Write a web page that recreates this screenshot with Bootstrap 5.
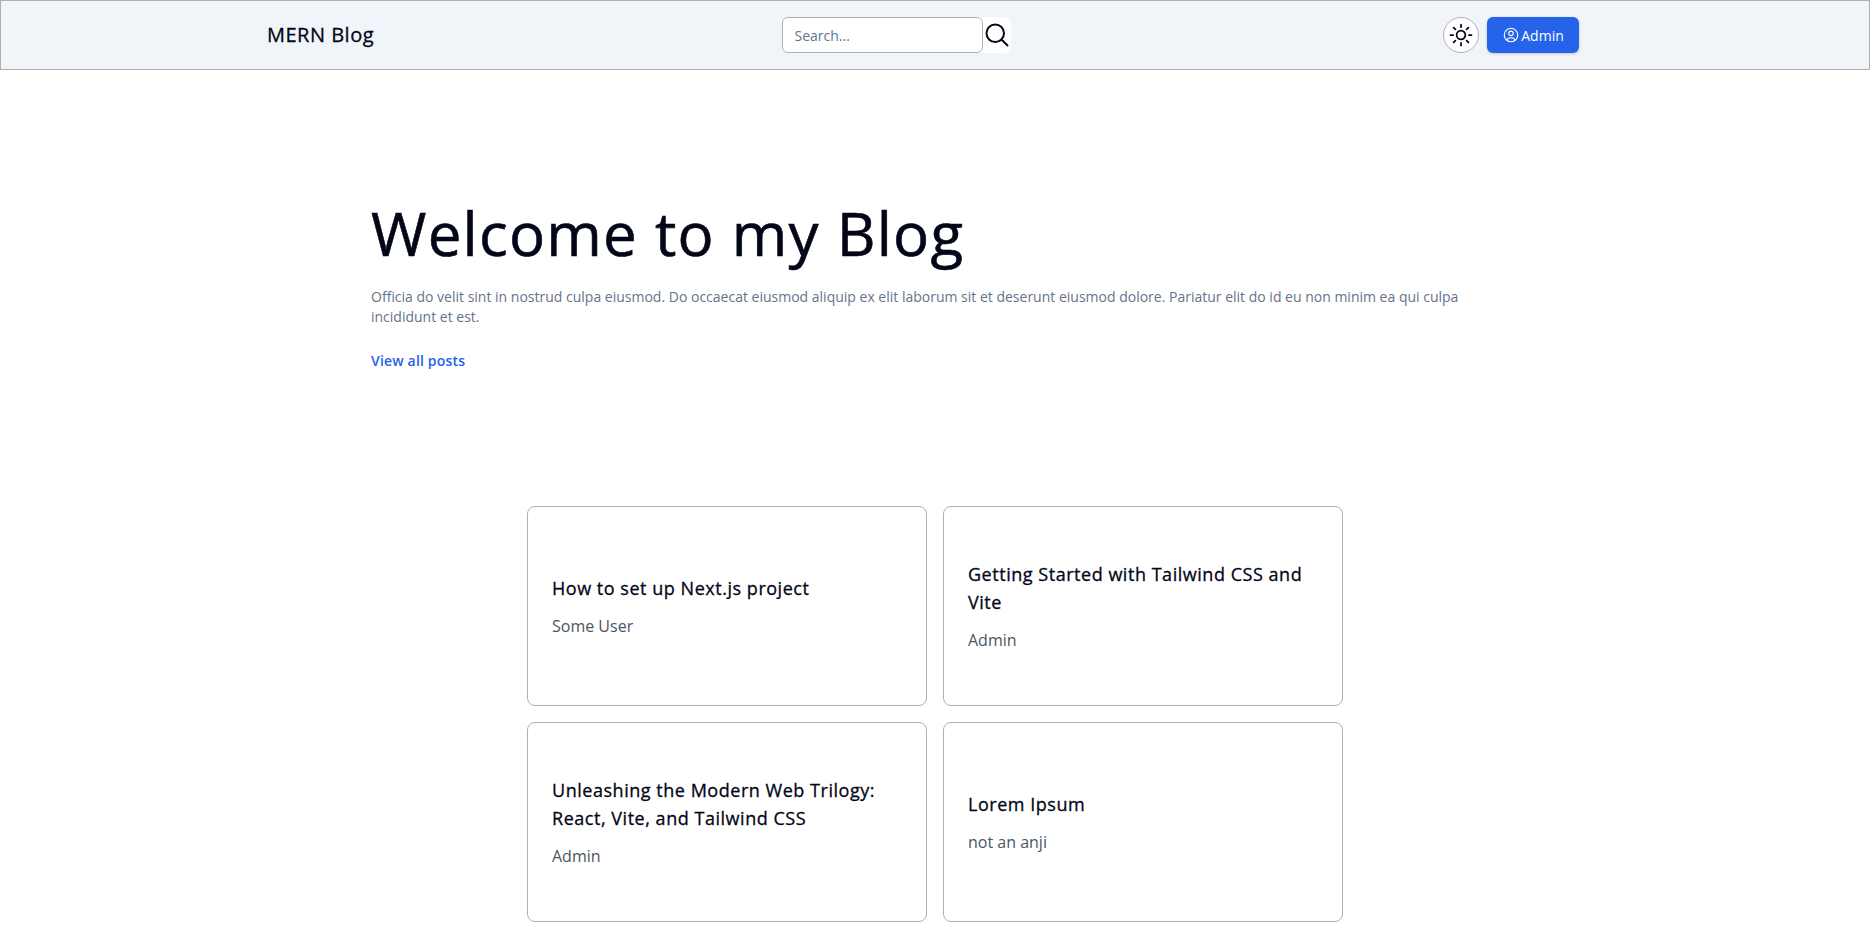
<!DOCTYPE html>
<html lang="en">
<head>
<meta charset="utf-8">
<title>MERN Blog</title>
<link href="https://cdn.jsdelivr.net/npm/bootstrap@5.3.0/dist/css/bootstrap.min.css" rel="stylesheet">
<style>
body{font-family:"Open Sans",sans-serif;color:#020617;background:#fff;height:931px;overflow:hidden}
.topbar{height:70px;background:#f1f5f9;border:1px solid #b0b0b4;padding:0 290px 0 266px}
.brand-name{font-size:20px;font-weight:400;letter-spacing:.5px;-webkit-text-stroke:.3px #020617;color:#020617;text-decoration:none;line-height:28px}
.search-wrap{background:#fff;border-radius:8px;height:36px;margin-left:-3px;margin-right:22px}
.search-input{width:201px;height:36px;border:1px solid #b0b0b4;border-radius:6px;padding:0 12px;font-size:14px;background:#fff;outline:0;color:#020617}
.search-input::placeholder{color:#64748b;opacity:1}
.search-btn{width:28px;height:36px;border:0;background:transparent;padding:0}
.theme-btn{width:36px;height:36px;border:1px solid #b0b0b4;border-radius:50%;background:#fff;padding:0}
.admin-btn{width:92px;height:36px;gap:1px;background:#2563eb;color:#fff;border:0;border-radius:6px;font-size:14px;font-weight:500;box-shadow:0 1px 3px rgba(15,23,42,.2);padding:0}
.hero-box{width:1128px;margin:127px 0 0 371px}
.hero-title{font-size:60px;line-height:72px;font-weight:400;letter-spacing:1.25px;-webkit-text-stroke:.6px #020617;color:#020617;margin:0 0 18px}
.hero-text{font-size:14px;line-height:20px;color:#64748b;margin:0 0 21px}
.hero-link{display:inline-block;font-size:14px;line-height:24px;font-weight:600;letter-spacing:.17px;color:#2563eb;text-decoration:none}
.post-grid{display:grid;grid-template-columns:400px 400px;gap:16px;justify-content:center;margin-top:133px}
.post-tile{height:200px;border:1px solid #b0b0b4;border-radius:8px;padding:24px;background:#fff}
.post-title{font-size:18px;line-height:28px;font-weight:400;letter-spacing:.53px;-webkit-text-stroke:.3px #020617;color:#020617;margin:0 0 12px}
.post-author{font-size:16px;line-height:24px;color:#4b5563;margin:0}
</style>
</head>
<body>
<nav class="topbar d-flex align-items-center justify-content-between">
  <a class="brand-name" href="#">MERN Blog</a>
  <form class="search-wrap d-flex" onsubmit="return false">
    <input class="search-input" type="text" placeholder="Search...">
    <button class="search-btn d-flex align-items-center justify-content-center" type="button" aria-label="Search">
      <svg width="28" height="28" viewBox="0 0 24 24" fill="none" stroke="#020617" stroke-width="1.700" stroke-linecap="round" stroke-linejoin="round"><path d="M21 21l-5.197-5.197m0 0A7.500 7.500 0 105.196 5.196a7.500 7.500 0 0010.607 10.607z"/></svg>
    </button>
  </form>
  <div class="d-flex align-items-center gap-2">
    <button class="theme-btn d-flex align-items-center justify-content-center" type="button" aria-label="Theme">
      <svg width="28" height="28" viewBox="0 0 24 24" fill="none" stroke="#020617" stroke-width="1.500" stroke-linecap="round" stroke-linejoin="round"><path d="M12 3v2.250m6.364.386l-1.591 1.591M21 12h-2.250m-.386 6.364l-1.591-1.591M12 18.750V21m-4.773-4.227l-1.591 1.591M5.250 12H3m4.227-4.773L5.636 5.636M15.750 12a3.750 3.750 0 11-7.500 0 3.750 3.750 0 017.500 0z"/></svg>
    </button>
    <button class="admin-btn d-flex align-items-center justify-content-center" type="button">
      <svg width="18" height="18" viewBox="0 0 24 24" fill="none" stroke="#fff" stroke-width="1.500" stroke-linecap="round" stroke-linejoin="round"><path d="M17.982 18.725A7.488 7.488 0 0012 15.750a7.488 7.488 0 00-5.982 2.975m11.963 0a9 9 0 10-11.963 0m11.963 0A8.966 8.966 0 0112 21a8.966 8.966 0 01-5.982-2.275M15 9.750a3 3 0 11-6 0 3 3 0 016 0z"/></svg>
      <span>Admin</span>
    </button>
  </div>
</nav>
<main>
  <section class="hero-box">
    <h1 class="hero-title">Welcome to my Blog</h1>
    <p class="hero-text">Officia do velit sint in nostrud culpa eiusmod. Do occaecat eiusmod aliquip ex elit laborum sit et deserunt eiusmod dolore. Pariatur elit do id eu non minim ea qui culpa incididunt et est.</p>
    <a class="hero-link" href="#">View all posts</a>
  </section>
  <section class="post-grid">
    <article class="post-tile d-flex flex-column justify-content-center">
      <h2 class="post-title">How to set up Next.js project</h2>
      <p class="post-author">Some User</p>
    </article>
    <article class="post-tile d-flex flex-column justify-content-center">
      <h2 class="post-title">Getting Started with Tailwind CSS and Vite</h2>
      <p class="post-author">Admin</p>
    </article>
    <article class="post-tile d-flex flex-column justify-content-center">
      <h2 class="post-title">Unleashing the Modern Web Trilogy: React, Vite, and Tailwind CSS</h2>
      <p class="post-author">Admin</p>
    </article>
    <article class="post-tile d-flex flex-column justify-content-center">
      <h2 class="post-title">Lorem Ipsum</h2>
      <p class="post-author">not an anji</p>
    </article>
  </section>
</main>
<script src="https://cdn.jsdelivr.net/npm/bootstrap@5.3.0/dist/js/bootstrap.bundle.min.js"></script>
</body>
</html>
